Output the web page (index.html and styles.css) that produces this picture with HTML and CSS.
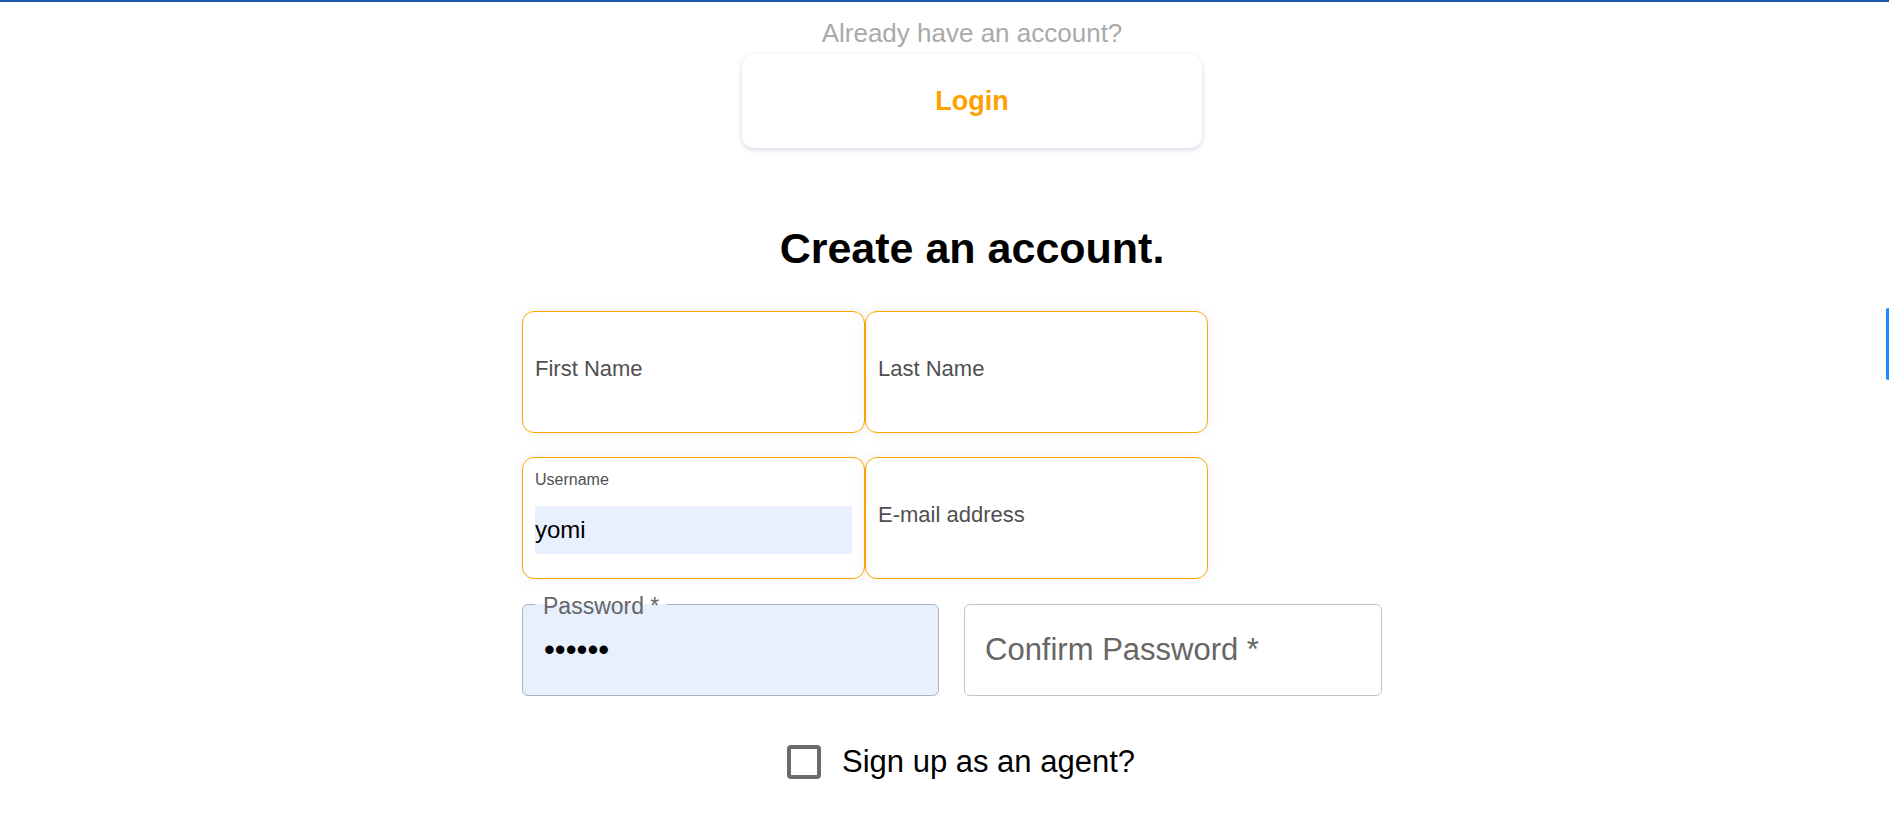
FILE: index.html
```html
<!DOCTYPE html>
<html lang="en">
<head>
<meta charset="utf-8">
<title>Create an account</title>
<link rel="stylesheet" href="styles.css">
</head>
<body>
<div class="topline"></div>
<div class="page">
  <main class="signup">
    <p class="already">Already have an account?</p>
    <a class="login-card" href="#">Login</a>
    <h1 class="title">Create an account.</h1>
    <div class="grid">
      <div class="field"><span class="ph">First Name</span></div>
      <div class="field"><span class="ph">Last Name</span></div>
      <div class="field field-filled">
        <span class="small-label">Username</span>
        <div class="value">yomi</div>
      </div>
      <div class="field"><span class="ph">E-mail address</span></div>
    </div>
    <div class="pw-row">
      <fieldset class="pw">
        <legend class="pw-legend">Password *</legend>
        <div class="dots">••••••</div>
      </fieldset>
      <div class="confirm"><span class="confirm-ph">Confirm Password *</span></div>
    </div>
    <label class="agent"><span class="cb"></span><span class="agent-text">Sign up as an agent?</span></label>
  </main>
</div>
<div class="side-tab"></div>
</body>
</html>
```
FILE: styles.css
```css
* { box-sizing: border-box; }
html, body { margin: 0; padding: 0; background: #fff; }
body { font-family: "Liberation Sans", Arial, sans-serif; color: #000; }

.topline { height: 2px; background: #1a5aa6; }

.page { padding-left: 55px; }

.signup {
  width: 900px;
  margin: 0 auto;
  display: flex;
  flex-direction: column;
  align-items: center;
}

.already {
  margin: 16px 0 0;
  font-size: 26px;
  line-height: 30px;
  color: #aaaaaa;
}

.login-card {
  margin-top: 6px;
  width: 460px;
  height: 94px;
  display: flex;
  align-items: center;
  justify-content: center;
  border-radius: 12px;
  background: #fff;
  box-shadow: 0 2px 5px rgba(90, 110, 160, 0.25), 0 0 2px rgba(0, 0, 0, 0.04);
  font-size: 27px;
  font-weight: bold;
  color: #ffa000;
  text-decoration: none;
}

.title {
  margin: 76px 0 0;
  font-size: 43px;
  line-height: 48px;
  font-weight: bold;
}

.grid {
  align-self: flex-start;
  margin-top: 39px;
  display: grid;
  grid-template-columns: 343px 343px;
  row-gap: 24px;
}

.field {
  height: 122px;
  border: 1px solid #ffa500;
  border-radius: 12px;
  background: #fff;
  box-shadow: 0 0 16px rgba(0, 0, 0, 0.05);
  padding: 44px 12px 0;
}

.ph {
  display: block;
  font-size: 22px;
  line-height: 26px;
  color: #505050;
}

.field-filled { padding-top: 13px; }

.small-label {
  display: block;
  font-size: 16px;
  line-height: 18px;
  color: #505050;
}

.value {
  margin-top: 17px;
  height: 48px;
  background: #e8f0fe;
  font-size: 24px;
  line-height: 48px;
  color: #000;
}

.pw-row {
  align-self: flex-start;
  margin-top: 11px;
  display: flex;
  align-items: flex-end;
  gap: 25px;
}

.pw {
  width: 417px;
  min-width: 0;
  margin: 0;
  padding: 0;
  border: 1px solid #aab3c2;
  border-radius: 6px;
  background: #e8f0fe;
}

.pw-legend {
  margin-left: 12px;
  padding: 4px 8px 0;
  font-size: 23px;
  line-height: 24px;
  color: #666;
}

.dots {
  height: 77px;
  padding-left: 21px;
  font-size: 31px;
  line-height: 63px;
  color: #000;
}

.confirm {
  width: 418px;
  height: 92px;
  border: 1px solid #c4c4c4;
  border-radius: 6px;
  padding: 0 0 0 20px;
  display: flex;
  align-items: center;
}

.confirm-ph {
  font-size: 31px;
  line-height: 36px;
  color: #666;
}

.agent {
  margin: 48px 22px 0 0;
  display: flex;
  align-items: center;
  gap: 21px;
  height: 36px;
}

.cb {
  width: 34px;
  height: 34px;
  border: 4px solid #6b6b6b;
  border-radius: 4px;
}

.agent-text {
  font-size: 31px;
  line-height: 36px;
  color: #000;
}

.side-tab {
  position: fixed;
  right: 0;
  top: 308px;
  width: 3px;
  height: 72px;
  background: #1a8cff;
  border-radius: 2px 0 0 2px;
}
```
